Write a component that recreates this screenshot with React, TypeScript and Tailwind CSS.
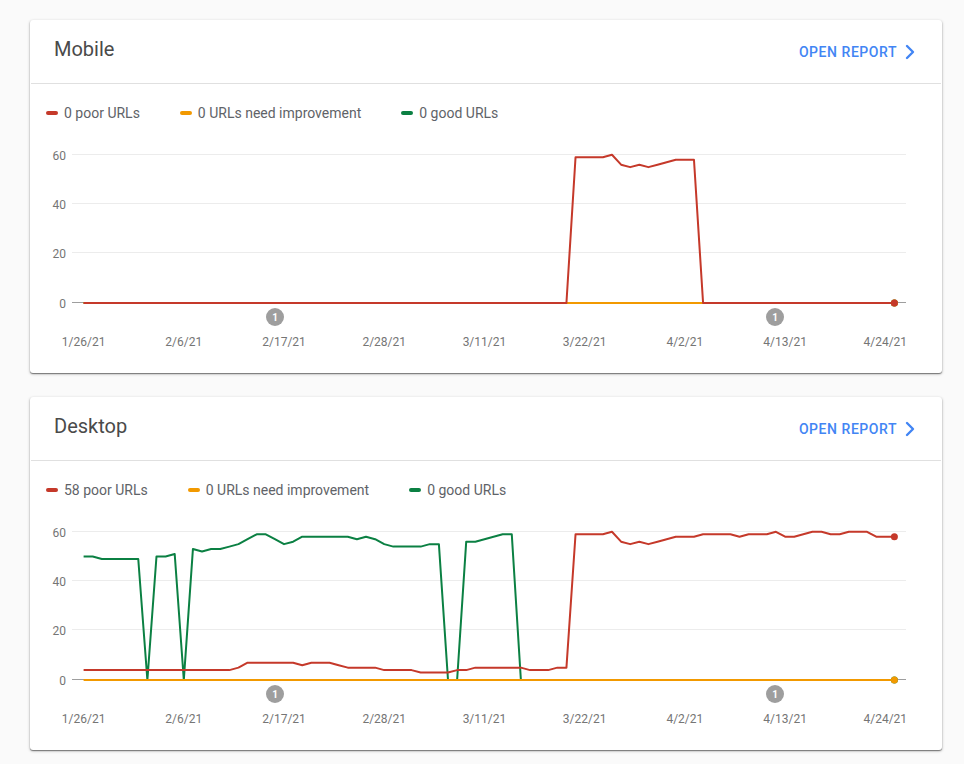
import React from 'react';
import { ChevronRight } from 'lucide-react';

const RED = '#c5392a';
const ORANGE = '#f29900';
const GREEN = '#0b8043';

const DATES = ['1/26/21', '2/6/21', '2/17/21', '2/28/21', '3/11/21', '3/22/21', '4/2/21', '4/13/21', '4/24/21'];
const TICKS = [60, 40, 20, 0];

const zeros = (n: number) => Array<number>(n).fill(0);

const mobilePoor = [
  ...zeros(54),
  59, 59, 59, 59, 60, 56, 55, 56, 55, 56, 57, 58, 58, 58,
  ...zeros(22),
];

const desktopPoor = [
  4, 4, 4, 4, 4, 4, 4, 4, 4, 4, 4, 4, 4, 4, 4, 4, 4, 5, 7, 7,
  7, 7, 7, 7, 6, 7, 7, 7, 6, 5, 5, 5, 5, 4, 4, 4, 4, 3, 3, 3,
  3, 4, 4, 5, 5, 5, 5, 5, 5, 4, 4, 4, 5, 5, 59, 59, 59, 59, 60, 56,
  55, 56, 55, 56, 57, 58, 58, 58, 59, 59, 59, 59, 58, 59, 59, 59, 60, 58, 58, 59,
  60, 60, 59, 59, 60, 60, 60, 58, 58, 58,
];

const desktopGood = [
  50, 50, 49, 49, 49, 49, 49, 0, 50, 50, 51, 0, 53, 52, 53, 53, 54, 55, 57, 59,
  59, 57, 55, 56, 58, 58, 58, 58, 58, 58, 57, 58, 57, 55, 54, 54, 54, 54, 55, 55,
  0, 0, 56, 56, 57, 58, 59, 59, 0,
  ...zeros(41),
];

const flat = zeros(90);

const xAt = (i: number) => 53.6 + 9.11 * i;
// series sit on whole pixels so the 2px strokes stay crisp on the zero line
const yAt = (v: number) => 170 - v * 2.47;

function Series({ data, color }: { data: number[]; color: string }) {
  const points = data.map((v, i) => `${xAt(i)},${yAt(v)}`).join(' ');
  return <polyline points={points} fill="none" stroke={color} strokeWidth="2" strokeLinejoin="round" />;
}

function Chart({ series }: { series: { data: number[]; color: string }[] }) {
  return (
    <svg width="912" height="232" viewBox="0 8 912 232" className="block" style={{ fontFamily: 'Roboto, sans-serif' }}>
      {TICKS.map((t) => {
        const y = Math.floor(yAt(t)) - 0.5 + (t === 60 ? 1 : 0);
        return (
          <g key={t}>
            <line x1="42" x2="876" y1={y} y2={y} stroke={t === 0 ? '#9e9e9e' : '#ececec'} strokeWidth="1" />
            <text x="36" y={y + 5} textAnchor="end" fontSize="12" fill="#757575">{t}</text>
          </g>
        );
      })}
      {series.map((s) => <Series key={s.color} {...s} />)}
      {series.map((s) => (
        <circle key={s.color} cx={xAt(89)} cy={yAt(s.data[s.data.length - 1])} r="3.5" fill={s.color} />
      ))}
      {[245, 745].map((x) => (
        <g key={x}>
          <circle cx={x} cy="184" r="9" fill="#9e9e9e" />
          <text x={x} y="187.5" textAnchor="middle" fontSize="10" fontWeight="700" fill="#fff">1</text>
        </g>
      ))}
      {DATES.map((d, i) => (
        <text key={d} x={xAt(i * 11)} y="213" textAnchor="middle" fontSize="12" fill="#757575">{d}</text>
      ))}
    </svg>
  );
}

function LegendItem({ color, label }: { color: string; label: string }) {
  return (
    <div className="flex items-center gap-[6px]">
      <span className="h-1 w-3 rounded-full" style={{ backgroundColor: color }} />
      <span className="text-sm leading-5 text-[#5f6368]">{label}</span>
    </div>
  );
}

function ReportCard({ title, poor, series }: {
  title: string;
  poor: number;
  series: { data: number[]; color: string }[];
}) {
  return (
    <section className="w-[912px] rounded-[3px] bg-white shadow-[0_1px_3px_rgba(0,0,0,0.3),0_1px_1px_rgba(0,0,0,0.4)]">
      <header className="mx-px flex h-16 items-center justify-between border-b border-[#e0e0e0] pl-[23px] pr-[19px] pb-[6px]">
        <h2 className="text-xl text-[#4a4a4a]">{title}</h2>
        <a className="mt-[6px] flex items-center gap-px text-sm font-medium tracking-[0.55px] text-[#4285f4]">
          OPEN REPORT
          <ChevronRight className="h-6 w-6" strokeWidth={2.4} />
        </a>
      </header>
      <div className="flex h-[57px] items-center gap-10 pl-4">
        <LegendItem color={RED} label={`${poor} poor URLs`} />
        <LegendItem color={ORANGE} label="0 URLs need improvement" />
        <LegendItem color={GREEN} label="0 good URLs" />
      </div>
      <Chart series={series} />
    </section>
  );
}

export default function App() {
  return (
    <div className="flex min-h-[764px] flex-col gap-6 bg-[#fafafa] pl-[30px] pt-5 font-['Roboto',sans-serif]">
      <ReportCard
        title="Mobile"
        poor={0}
        series={[
          { data: flat, color: GREEN },
          { data: flat, color: ORANGE },
          { data: mobilePoor, color: RED },
        ]}
      />
      <ReportCard
        title="Desktop"
        poor={58}
        series={[
          { data: desktopGood, color: GREEN },
          { data: desktopPoor, color: RED },
          { data: flat, color: ORANGE },
        ]}
      />
    </div>
  );
}
